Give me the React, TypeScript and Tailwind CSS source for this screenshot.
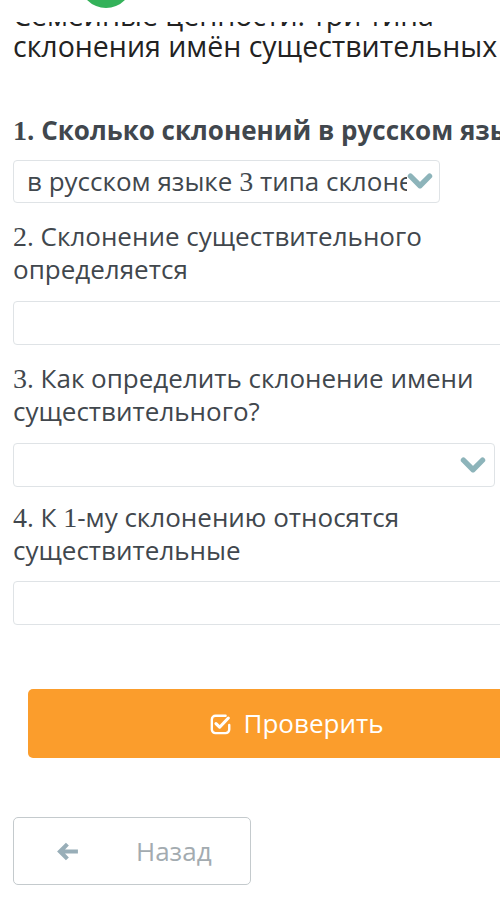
import React from "react";

const Num = ({ n }: { n: string }) => (
  <span className="font-['Liberation_Serif',serif] text-[28px]">{n}</span>
);

const Chevron = () => (
  <svg viewBox="0 0 24 16" className="w-[26px] h-[17px]" fill="none">
    <path d="M3 3l9 9 9-9" stroke="#8db4ba" strokeWidth="5" strokeLinecap="round" strokeLinejoin="round" />
  </svg>
);

const Question = ({ n, children, bold }: { n: string; children: React.ReactNode; bold?: boolean }) => (
  <p
    className={`text-[26px] leading-[32px] text-[#41474d] pr-2 ${bold ? "font-bold whitespace-nowrap" : ""}`}
  >
    <Num n={n} />
    {children}
  </p>
);

export default function App() {
  return (
    <div className="relative w-[500px] h-[914px] overflow-hidden bg-white font-['Open_Sans',sans-serif]">
      {/* Title, scrolled partly off */}
      <div className="pl-[13px] pt-[5px] text-[28.5px] leading-[31px] text-[#222] whitespace-nowrap">
        <p className="-mt-[5px]">Семейные ценности. три типа</p>
        <p>склонения имён существительных</p>
      </div>
      <div className="absolute left-0 top-0 w-full h-[22px] bg-white" />
      <div className="absolute left-[80px] -top-[44px] w-[52px] h-[52px] rounded-full bg-[#34b25a]" />

      <div className="pl-[13px] w-[560px]">
        <div className="mt-[52px]">
          <Question n="1" bold>
            . Сколько склонений в русском языке?
          </Question>
        </div>
        <div className="mt-[13px] flex items-center w-[427px] h-[43px] border border-[#dfe3e6] rounded-[4px] pl-[13px] pr-[6px]">
          <span className="flex-1 overflow-hidden whitespace-nowrap text-[26px] text-[#41474d]">
            в русском языке <Num n="3" /> типа склонения
          </span>
          <Chevron />
        </div>

        <div className="mt-[17px] w-[470px]">
          <Question n="2">. Склонение существительного определяется</Question>
        </div>
        <div className="mt-[16px] w-[520px] h-[44px] border border-[#dfe3e6] rounded-[4px]" />

        <div className="mt-[17px] w-[470px]">
          <Question n="3">. Как определить склонение имени существительного?</Question>
        </div>
        <div className="mt-[16px] flex items-center justify-end w-[482px] h-[44px] border border-[#dfe3e6] rounded-[4px] pr-[8px]">
          <Chevron />
        </div>

        <div className="mt-[14px] w-[470px]">
          <Question n="4">
            . К <Num n="1" />-му склонению относятся существительные
          </Question>
        </div>
        <div className="mt-[15px] w-[520px] h-[44px] border border-[#dfe3e6] rounded-[4px]" />

        <button className="mt-[64px] ml-[15px] flex items-center justify-center gap-[11px] w-[560px] h-[69px] rounded-[5px] bg-[#fb9d2c] text-white text-[26px] pr-[22px]">
          <svg viewBox="0 0 24 24" className="w-[22px] h-[22px]" fill="none">
            <path d="M17 3H6a4 4 0 0 0-4 4v11a4 4 0 0 0 4 4h11a4 4 0 0 0 4-4v-5" stroke="white" strokeWidth="2.6" strokeLinecap="round" />
            <path d="M6.5 11.5l4 4 9.5-10" stroke="white" strokeWidth="3.4" strokeLinecap="round" strokeLinejoin="round" />
          </svg>
          Проверить
        </button>

        <button className="mt-[59px] flex items-center w-[238px] h-[68px] rounded-[5px] border border-[#c4cacd] bg-white">
          <svg viewBox="0 0 24 20" className="ml-[41px] w-[25px] h-[21px]" fill="#98aeb8">
            <path d="M10.5 1.5L2 10l8.5 8.5 2.8-2.8-3.7-3.7H22V8H9.6l3.7-3.7z" />
          </svg>
          <span className="ml-[56px] text-[26px] text-[#a3abb0]">Назад</span>
        </button>
      </div>
    </div>
  );
}
